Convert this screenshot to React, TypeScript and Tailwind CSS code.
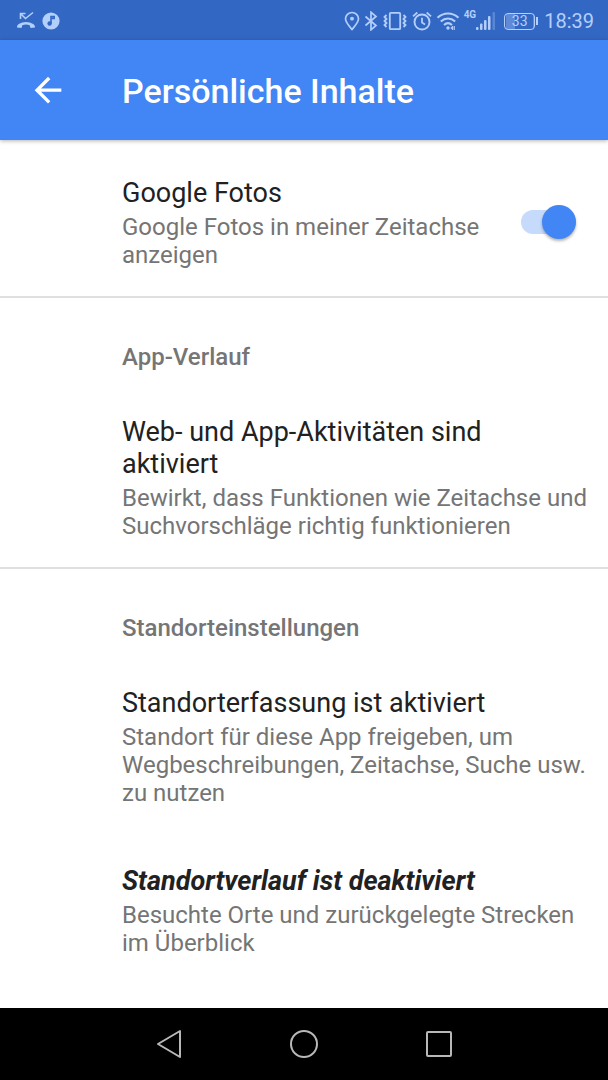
import { useState, type ReactNode } from "react";

function StatusBar() {
  return (
    <div className="flex h-10 items-center justify-between bg-[#3367c4] pl-4 pr-3.5 pt-0.5 text-[#b3cffb]">
      <div className="flex items-center gap-1.5">
        <svg width="20" height="20" viewBox="0 0 20 20" fill="none" aria-hidden="true">
          <path d="M4.500 2.500l5 5L17 1.500M4.500 8V2.500H9.500" stroke="currentColor" strokeWidth="1.600" />
          <path
            d="M1 16.500c0-1.700.5-2.700 1.800-3.500 4.300-2.700 10.100-2.700 14.400 0 1.300.8 1.800 1.800 1.800 3.500l-4.500.5-.8-2.800c-2.400-.8-5-.8-7.400 0L5.500 17z"
            fill="currentColor"
          />
        </svg>
        <svg width="18" height="18" viewBox="0 0 18 18" aria-hidden="true">
          <circle cx="9" cy="9" r="8.600" fill="currentColor" />
          <path d="M9 11.500V4.500h3.200v1.900H9" fill="none" stroke="#3367c4" strokeWidth="1.600" />
          <circle cx="7.600" cy="11.500" r="2.200" fill="#3367c4" />
        </svg>
      </div>

      <div className="flex items-center">
        <svg width="16" height="20" viewBox="0 0 16 20" fill="none" aria-hidden="true">
          <path d="M8 18.500C4.500 14.500 1.500 11.200 1.500 7.800a6.500 6.300 0 0113 0c0 3.400-3 6.700-6.500 10.700z" stroke="currentColor" strokeWidth="1.700" />
          <circle cx="8" cy="7.700" r="1.900" fill="currentColor" />
        </svg>
        <svg className="ml-1" width="14" height="20" viewBox="0 0 14 20" fill="none" aria-hidden="true">
          <path d="M1.500 5.500l10.500 9L7 18.800V1.200l5 4.300-10.500 9" stroke="currentColor" strokeWidth="1.700" />
        </svg>
        <svg className="ml-1" width="26" height="20" viewBox="0 0 26 20" fill="none" aria-hidden="true">
          <rect x="7.800" y="1.800" width="10.400" height="16.400" rx="1" stroke="currentColor" strokeWidth="1.800" />
          <path
            d="M4.500 4L2.500 6l2 2-2 2 2 2-2 2 2 2M21.500 4l2 2-2 2 2 2-2 2 2 2-2 2"
            stroke="currentColor"
            strokeWidth="1.800"
          />
        </svg>
        <svg className="ml-1" width="20" height="20" viewBox="0 0 20 20" fill="none" aria-hidden="true">
          <circle cx="10" cy="11" r="7.500" stroke="currentColor" strokeWidth="1.900" />
          <path d="M10 6.800V11.500l3 2M1 5.300l4.300-3.800M19 5.300l-4.300-3.800" stroke="currentColor" strokeWidth="1.800" />
        </svg>
        <svg className="ml-1" width="24" height="20" viewBox="0 0 24 20" fill="none" aria-hidden="true">
          <path d="M1.500 6.800c6-5.700 15-5.700 21 0M4.800 10.500c4.300-4 10.100-4 14.400 0M8 14c2.400-2.200 5.600-2.200 8 0" stroke="currentColor" strokeWidth="2" />
          <circle cx="12" cy="17" r="1.700" fill="currentColor" />
          <path d="M14.800 17l2.200-2v4zM18.500 15v4" fill="currentColor" stroke="currentColor" strokeWidth="0.800" />
        </svg>
        <span className="ml-1 self-start text-[10px] font-bold leading-3">4G</span>
        <svg width="20" height="20" viewBox="0 0 20 20" fill="currentColor" aria-hidden="true">
          <rect x="0" y="16" width="2.500" height="3" rx="1" />
          <rect x="4" y="12.500" width="2.500" height="6.500" rx="1" />
          <rect x="8" y="9" width="2.500" height="10" rx="1" />
          <rect x="12" y="5" width="2.500" height="14" rx="1" />
          <rect x="16.500" y="1" width="2.500" height="18" rx="1" opacity="0.300" />
        </svg>
        <div className="ml-2 flex h-[17px] w-[31px] items-center justify-center rounded-sm border border-[#b3cffb] bg-linear-to-r from-[#5f8ad8] from-33% to-transparent to-33% bg-origin-content p-px text-sm leading-none">
          33
        </div>
        <div className="ml-px h-2 w-0.5 bg-[#b3cffb]" />
        <time className="ml-1.5 text-xl leading-6">18:39</time>
      </div>
    </div>
  );
}

function AppBar() {
  return (
    <header className="z-10 flex h-[100px] items-center bg-[#4285f4] px-7 pt-0.5 text-white shadow-[0_1px_4px_rgba(0,0,0,0.3)]">
      <button type="button" aria-label="Zurück" className="flex size-10 items-center justify-center">
        <svg width="40" height="40" viewBox="0 0 24 24" fill="currentColor" aria-hidden="true">
          <path d="M20 10.500H7.830l5.590-5.590L12 3.500l-8 8 8 8 1.410-1.410L7.830 12.500H20v-2z" />
        </svg>
      </button>
      <h1 className="ml-[54px] text-[34px] font-medium leading-10">Persönliche Inhalte</h1>
    </header>
  );
}

function Label({ title, summary, emphasized = false }: { title: string; summary: string; emphasized?: boolean }) {
  return (
    <span className="block min-w-0 flex-1">
      <span className={emphasized ? "block pr-3 text-[27px] font-bold italic leading-8 text-[#212121]" : "block pr-3 text-[27px] leading-8 text-[#212121]"}>
        {title}
      </span>
      <span className="mt-1 block text-2xl leading-7 text-[#757575]">{summary}</span>
    </span>
  );
}

function Setting(props: { title: string; summary: string; emphasized?: boolean }) {
  return (
    <button type="button" className="flex w-full pb-[27px] pl-[122px] pr-4 pt-[31px] text-left">
      <Label {...props} />
    </button>
  );
}

function SwitchSetting({ title, summary }: { title: string; summary: string }) {
  const [on, setOn] = useState(true);
  return (
    <label className="flex items-center gap-6 pb-[27px] pl-[122px] pr-8 pt-[37px]">
      <Label title={title} summary={summary} />
      <span className="flex w-[55px] items-center pb-0.5">
        <input
          type="checkbox"
          role="switch"
          checked={on}
          onChange={(event) => setOn(event.target.checked)}
          className="flex h-6 w-full appearance-none items-center rounded-full bg-gray-300 before:size-[34px] before:shrink-0 before:rounded-full before:bg-gray-50 before:shadow-[0_2px_3px_rgba(0,0,0,0.3)] checked:justify-end checked:bg-[#c6dafc] checked:before:bg-[#4285f4]"
        />
      </span>
    </label>
  );
}

function Section({ heading, children }: { heading: string; children: ReactNode }) {
  return (
    <section className="border-t-2 border-[#e0e0e0]">
      <h2 className="pb-[14px] pl-[122px] pr-7 pt-[45px] text-2xl font-medium leading-7 text-[#757575]">{heading}</h2>
      {children}
    </section>
  );
}

function NavigationBar() {
  return (
    <nav className="flex h-[72px] items-center justify-center gap-[95px] bg-black text-[#b8b8b8]">
      <button type="button" aria-label="Zurück" className="size-10">
        <svg width="40" height="40" viewBox="0 0 40 40" fill="none" stroke="currentColor" strokeWidth="2" strokeLinejoin="round" aria-hidden="true">
          <path d="M31 7v26L9 20z" />
        </svg>
      </button>
      <button type="button" aria-label="Startbildschirm" className="size-10">
        <svg width="40" height="40" viewBox="0 0 40 40" fill="none" stroke="currentColor" strokeWidth="2" aria-hidden="true">
          <circle cx="20" cy="20" r="13" />
        </svg>
      </button>
      <button type="button" aria-label="Letzte Apps" className="size-10">
        <svg width="40" height="40" viewBox="0 0 40 40" fill="none" stroke="currentColor" strokeWidth="2" aria-hidden="true">
          <rect x="8" y="8" width="24" height="24" rx="1" />
        </svg>
      </button>
    </nav>
  );
}

export default function App() {
  return (
    <div className="flex min-h-screen flex-col bg-white font-[Roboto,sans-serif]">
      <StatusBar />
      <AppBar />
      <main className="flex-1">
        <SwitchSetting title="Google Fotos" summary="Google Fotos in meiner Zeitachse anzeigen" />
        <Section heading="App-Verlauf">
          <Setting
            title="Web- und App-Aktivitäten sind aktiviert"
            summary="Bewirkt, dass Funktionen wie Zeitachse und Suchvorschläge richtig funktionieren"
          />
        </Section>
        <Section heading="Standorteinstellungen">
          <Setting
            title="Standorterfassung ist aktiviert"
            summary="Standort für diese App freigeben, um Wegbeschreibungen, Zeitachse, Suche usw. zu nutzen"
          />
          <Setting emphasized title="Standortverlauf ist deaktiviert" summary="Besuchte Orte und zurückgelegte Strecken im Überblick" />
        </Section>
      </main>
      <NavigationBar />
    </div>
  );
}
